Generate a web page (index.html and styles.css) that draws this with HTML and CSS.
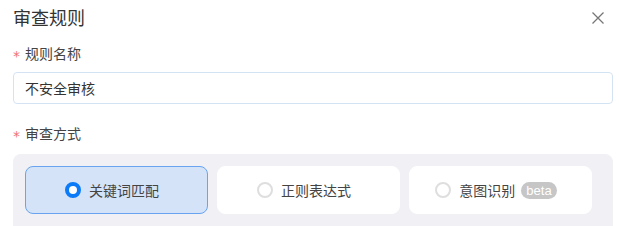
FILE: index.html
```html
<html>
<head>
	<title>审查规则</title>
	<meta charset="utf-8" />
	<link rel="stylesheet" href="styles.css">
</head>
<body>
	<div class="dialog">
		<div class="header">
			<h1>审查规则</h1>
			<span class="close">
				<svg width="14" height="14" viewBox="0 0 14 14"><path d="M1.5 1.5 L12.5 12.5 M12.5 1.5 L1.5 12.5" stroke="#777" stroke-width="1.3" fill="none"/></svg>
			</span>
		</div>
		<div class="field-label"><span class="req">*</span>规则名称</div>
		<div class="input">不安全审核</div>
		<div class="field-label second"><span class="req">*</span>审查方式</div>
		<div class="mode-panel">
			<div class="mode-card selected">
				<span class="radio"></span>
				<span class="mode-name">关键词匹配</span>
			</div>
			<div class="mode-card">
				<span class="radio"></span>
				<span class="mode-name">正则表达式</span>
			</div>
			<div class="mode-card">
				<span class="radio"></span>
				<span class="mode-name">意图识别</span>
				<span class="beta">beta</span>
			</div>
		</div>
	</div>
</body>
</html>
```

FILE: styles.css
```css
body {
	margin: 0;
	background: #ffffff;
	color: #3a3a3a;
	font-family: "Noto Sans CJK SC", "Noto Sans", sans-serif;
	font-size: 14px;
	font-weight: 400;
}
.dialog {
	display: flex;
	flex-direction: column;
	padding: 0 6px 0 13px;
}
.header {
	display: flex;
	align-items: center;
	justify-content: space-between;
	height: 34px;
}
.header > h1 {
	margin: 0;
	font-size: 18px;
	font-weight: 400;
	line-height: 34px;
	color: #333;
}
.close {
	display: flex;
	width: 14px;
	height: 14px;
	margin-right: 8px;
	margin-top: 1px;
}

.field-label {
	margin-top: 8px;
	height: 22px;
	line-height: 22px;
	color: #444;
	display: flex;
	align-items: center;
}
.field-label.second {
	margin-top: 18px;
}
.req {
	color: #f07070;
	font-size: 14px;
	line-height: 14px;
	height: 14px;
	margin-right: 5px;
	padding-top: 6px;
	font-family: "DejaVu Sans", sans-serif;
}

.input {
	margin-top: 8px;
	height: 32px;
	box-sizing: border-box;
	border: 1px solid #d4e3f3;
	border-radius: 4px;
	padding: 0 11px;
	display: flex;
	align-items: center;
	color: #333;
}

/* mode cards */
.mode-panel {
	margin-top: 10px;
	background: #f0f0f5;
	border-radius: 8px 8px 0 0;
	padding: 12px 21px 14px 12px;
	display: grid;
	grid-template-columns: repeat(3, 1fr);
	gap: 9px;
}
.mode-card {
	height: 48px;
	box-sizing: border-box;
	background: #ffffff;
	border: 1px solid #ffffff;
	border-radius: 8px;
	display: flex;
	align-items: center;
	justify-content: center;
	padding-right: 9px;
	color: #444;
}
.mode-card.selected {
	background: #d5e3f8;
	border-color: #68a4f0;
}
.radio {
	width: 16px;
	height: 16px;
	box-sizing: border-box;
	border: 2px solid #dedede;
	border-radius: 50%;
	background: #fff;
	margin-right: 8px;
}
.selected .radio {
	border: 4px solid #0b7bf8;
}
.beta {
	margin-left: 6px;
	background: #c6c6c6;
	color: #fff;
	font-family: "Liberation Sans", sans-serif;
	font-size: 13px;
	line-height: 17px;
	padding: 0 5px;
	border-radius: 9px;
}
```
